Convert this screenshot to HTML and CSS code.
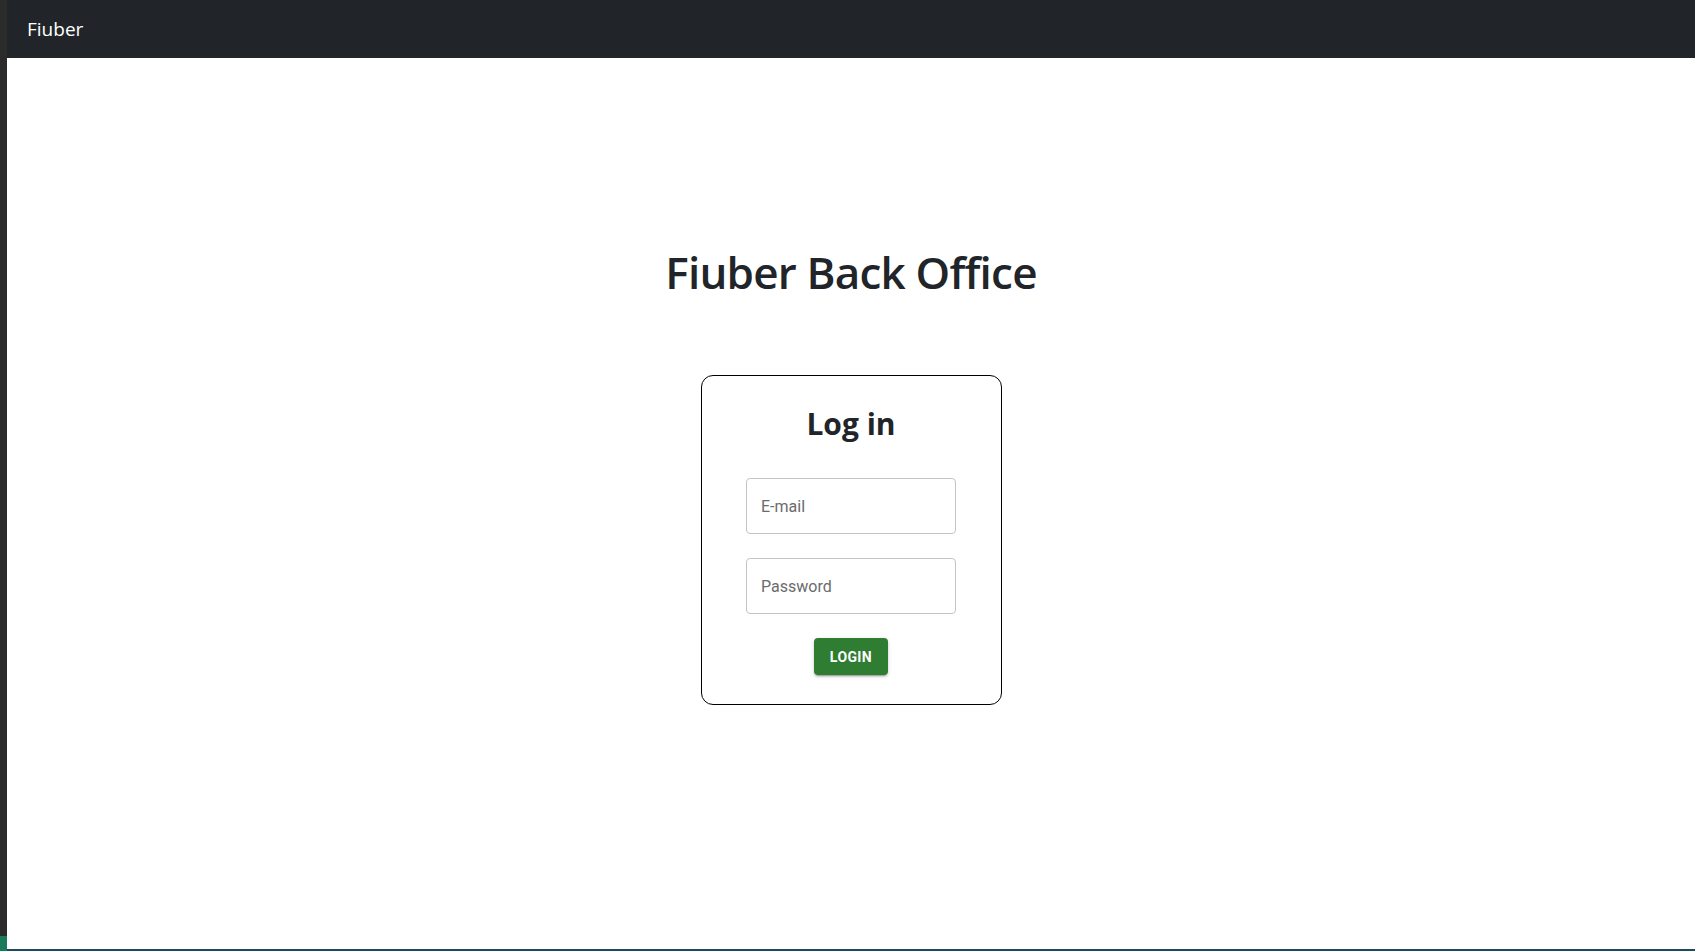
FILE: index.html
```html
<!DOCTYPE html>
<html lang="en">
<head>
<meta charset="utf-8">
<title>Fiuber Back Office</title>
<link rel="stylesheet" href="styles.css">
</head>
<body>
<div class="side-strip"><div class="side-accent"></div></div>
<div class="app">
  <nav class="navbar">
    <span class="brand">Fiuber</span>
  </nav>
  <main class="content">
    <h1 class="title">Fiuber Back Office</h1>
    <form class="card">
      <h2 class="card-title">Log in</h2>
      <div class="field"><input type="text" placeholder="E-mail"></div>
      <div class="field"><input type="password" placeholder="Password"></div>
      <button type="button" class="btn-login">Login</button>
    </form>
  </main>
  <div class="bottom-line"></div>
</div>
</body>
</html>
```
FILE: styles.css
```css
html, body {
  margin: 0;
  padding: 0;
  height: 100%;
}
body {
  display: flex;
  background: #fff;
  color: #212529;
  font-family: "Open Sans", "Noto Sans", sans-serif;
  overflow: hidden;
}
.side-strip {
  width: 7px;
  flex: 0 0 7px;
  background: #2b2b2b;
  display: flex;
  flex-direction: column;
  justify-content: flex-end;
}
.side-accent {
  height: 15px;
  background: #1c7a5c;
}
.app {
  flex: 1;
  display: flex;
  flex-direction: column;
  min-width: 0;
}
.navbar {
  height: 58px;
  flex: 0 0 58px;
  background: #212529;
  display: flex;
  align-items: center;
  padding-left: 20px;
}
.brand {
  color: #fff;
  font-size: 19px;
  line-height: 1;
}
.content {
  flex: 1;
  display: flex;
  flex-direction: column;
  align-items: center;
}
.title {
  margin: 187px 0 0;
  font-size: 44px;
  font-weight: 600;
  line-height: 54px;
  letter-spacing: -0.8px;
}
.card {
  margin-top: 76px;
  width: 301px;
  box-sizing: border-box;
  border: 1px solid #000;
  border-radius: 12px;
  padding: 29px 0 29px;
  display: flex;
  flex-direction: column;
  align-items: center;
}
.card-title {
  margin: 0 0 36px;
  font-size: 30px;
  font-weight: 700;
  line-height: 37px;
}
.field {
  width: 210px;
  margin-bottom: 24px;
}
.field input {
  width: 100%;
  height: 56px;
  box-sizing: border-box;
  border: 1px solid #c4c4c4;
  border-radius: 4px;
  padding: 0 14px;
  font-family: Roboto, "Liberation Sans", sans-serif;
  font-size: 16px;
  color: #212121;
  outline: none;
}
.field input::placeholder {
  color: #6b6b6b;
  opacity: 1;
}
.btn-login {
  height: 37px;
  padding: 0 16px;
  border: none;
  border-radius: 4px;
  background: #2e7d32;
  color: #fff;
  font-family: Roboto, "Liberation Sans", sans-serif;
  font-weight: 700;
  font-size: 14px;
  letter-spacing: 0.4px;
  text-transform: uppercase;
  box-shadow: 0 3px 1px -2px rgba(0,0,0,0.2), 0 2px 2px 0 rgba(0,0,0,0.14), 0 1px 5px 0 rgba(0,0,0,0.12);
  cursor: pointer;
}
.bottom-line {
  height: 2px;
  flex: 0 0 2px;
  background: #1d4a5e;
}
```
